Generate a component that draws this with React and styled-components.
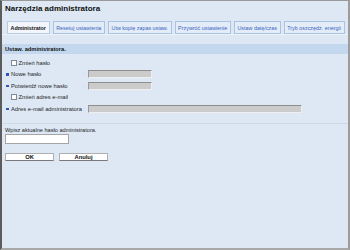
import styled, { createGlobalStyle } from 'styled-components'

const Global = createGlobalStyle`
  html, body { margin: 0; padding: 0; }
  body { font-family: "Liberation Sans", Arial, sans-serif; }
`

const tabs = [
  'Administrator',
  'Resetuj ustawienia',
  'Utw kopię zapas ustaw.',
  'Przywróć ustawienie',
  'Ustaw datę/czas',
  'Tryb oszczędz. energii',
]

const rows = [
  { kind: 'check', label: 'Zmień hasło' },
  { kind: 'field', label: 'Nowe hasło', wide: false },
  { kind: 'field', label: 'Potwierdź nowe hasło', wide: false },
  { kind: 'check', label: 'Zmień adres e-mail' },
  { kind: 'field', label: 'Adres e-mail administratora', wide: true },
]

const App = () => {
  return (
    <>
      <Global />
      <Page>
        <Title>Narzędzia administratora</Title>
        <TabBar>
          {tabs.map((t, i) => (
            <Tab key={t} $active={i === 0}>{t}</Tab>
          ))}
        </TabBar>
        <SectionHeader>Ustaw. administratora.</SectionHeader>
        <Rows>
          {rows.map((r) => (
            <Row key={r.label}>
              {r.kind === 'check' ? (
                <Label $indent>
                  <Check />
                  {r.label}
                </Label>
              ) : (
                <>
                  <Label>
                    <Bullet />
                    {r.label}
                  </Label>
                  <Colon>:</Colon>
                  <GrayInput $wide={r.wide} />
                </>
              )}
            </Row>
          ))}
        </Rows>
        <Divider />
        <Footer>
          <Hint>Wpisz aktualne hasło administratora.</Hint>
          <PassInput />
          <Buttons>
            <Button>OK</Button>
            <Button>Anuluj</Button>
          </Buttons>
        </Footer>
      </Page>
    </>
  )
}

const Page = styled.div`
width: 350px;
height: 250px;
box-sizing: border-box;
background: #dde8f4;
border-top: 1px solid #9a9a9a;
border-left: 2px solid #5c5c5c;
border-right: 2px solid #9c9c9c;
border-bottom: 2px solid #a8a8a8;
color: #1e1e1e;
display: flex;
flex-direction: column;
overflow: hidden;
`

const Title = styled.div`
margin: 3px 0 0 3px;
font-size: 8px;
line-height: 10px;
font-weight: 700;
color: #111;
`

const TabBar = styled.div`
margin-top: 7px;
padding: 0 0 0 5px;
display: flex;
gap: 3px;
border-bottom: 1px solid #eef3f9;
`

const Tab = styled.div`
height: 11px;
padding: 0 2.6px;
display: flex;
align-items: center;
font-size: 5.4px;
white-space: nowrap;
border: 1px solid ${p => p.$active ? '#b8cbe0' : '#a9c3e0'};
background: ${p => p.$active ? '#f2f6fb' : '#e3ecf7'};
color: ${p => p.$active ? '#111' : '#3a66c4'};
font-weight: ${p => p.$active ? 700 : 400};
`

const SectionHeader = styled.div`
margin-top: 9px;
height: 10px;
padding-left: 3px;
display: flex;
align-items: center;
background: #c3d8ee;
font-size: 5.7px;
font-weight: 700;
color: #111;
`

const Rows = styled.div`
padding: 3px 0 0 4px;
display: grid;
grid-auto-rows: 11.5px;
`

const Row = styled.div`
display: flex;
align-items: center;
`

const Label = styled.div`
width: ${p => p.$indent ? 'auto' : '77px'};
padding-left: ${p => p.$indent ? '5px' : '0'};
display: flex;
align-items: center;
gap: 1.5px;
font-size: 5.8px;
white-space: nowrap;
`

const Bullet = styled.span`
width: 2.5px;
height: 2.5px;
margin-right: 1px;
background: #2b56b0;
`

const Check = styled.span`
width: 4px;
height: 4px;
border: 1px solid #7d8a99;
background: #fff;
`

const Colon = styled.span`
width: 5px;
font-size: 6px;
color: #b3bdc8;
`

const GrayInput = styled.div`
width: ${p => p.$wide ? '214px' : '64px'};
height: 8px;
box-sizing: border-box;
background: #cbcbcb;
border-top: 1px solid #8e8e8e;
border-left: 1px solid #9a9a9a;
border-right: 1px solid #efefef;
border-bottom: 1px solid #efefef;
`

const Divider = styled.div`
margin-top: 8px;
height: 1px;
background: #ccd9e7;
`

const Footer = styled.div`
padding: 2px 0 0 3px;
display: flex;
flex-direction: column;
align-items: flex-start;
`

const Hint = styled.div`
font-size: 5.6px;
line-height: 8px;
`

const PassInput = styled.div`
width: 64px;
height: 10px;
box-sizing: border-box;
background: #fff;
border: 1px solid #a5a5a5;
`

const Buttons = styled.div`
margin-top: 9px;
display: flex;
gap: 5px;
`

const Button = styled.div`
width: 49px;
height: 8px;
box-sizing: border-box;
display: flex;
align-items: center;
justify-content: center;
background: #fff;
border: 1px solid #b0b0b0;
border-bottom: 1px solid #7a7a7a;
font-size: 5.8px;
font-weight: 700;
color: #111;
`

export default App
